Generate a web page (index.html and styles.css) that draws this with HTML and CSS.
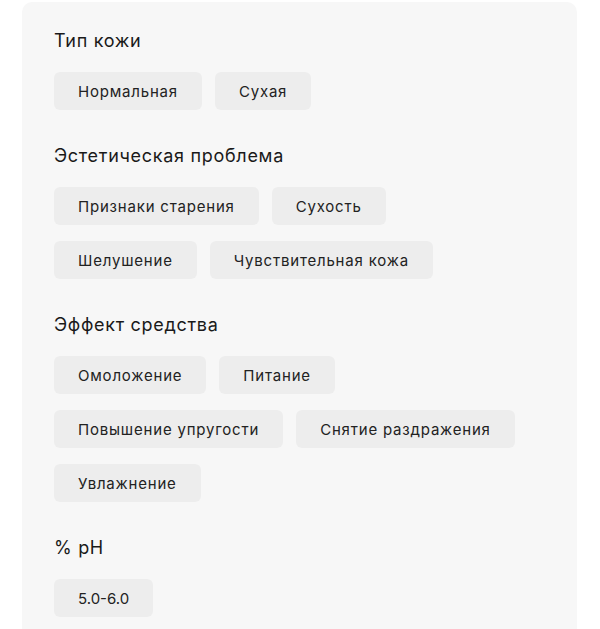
FILE: index.html
```html
<!DOCTYPE html>
<html lang="ru">
<head>
<meta charset="utf-8">
<link rel="stylesheet" href="styles.css">
</head>
<body>
<div class="card">
  <section class="group">
    <h3 class="title">Тип кожи</h3>
    <div class="chips">
      <span class="chip">Нормальная</span>
      <span class="chip">Сухая</span>
    </div>
  </section>
  <section class="group">
    <h3 class="title">Эстетическая проблема</h3>
    <div class="chips">
      <span class="chip">Признаки старения</span>
      <span class="chip">Сухость</span>
      <span class="chip">Шелушение</span>
      <span class="chip">Чувствительная кожа</span>
    </div>
  </section>
  <section class="group">
    <h3 class="title">Эффект средства</h3>
    <div class="chips">
      <span class="chip">Омоложение</span>
      <span class="chip">Питание</span>
      <span class="chip">Повышение упругости</span>
      <span class="chip">Снятие раздражения</span>
      <span class="chip">Увлажнение</span>
    </div>
  </section>
  <section class="group">
    <h3 class="title">% pH</h3>
    <div class="chips">
      <span class="chip chip-num">5.0-6.0</span>
    </div>
  </section>
</div>
</body>
</html>
```
FILE: styles.css
```css
html, body {
  margin: 0;
  padding: 0;
  background: #ffffff;
}
body {
  font-family: Inter, "Noto Sans", sans-serif;
  color: #1f1f1f;
}
.card {
  margin: 2px 0 0 22px;
  width: 555px;
  box-sizing: border-box;
  padding: 27px 32px 40px;
  background: #f7f7f7;
  border-radius: 10px 10px 0 0;
  display: flex;
  flex-direction: column;
  gap: 34px;
}
.group {
  display: flex;
  flex-direction: column;
  gap: 19px;
}
.title {
  margin: 0;
  font-size: 18px;
  line-height: 24px;
  font-weight: 400;
  letter-spacing: 0.7px;
  color: #1a1a1a;
}
.chips {
  display: flex;
  flex-wrap: wrap;
  gap: 16px 13px;
  max-width: 470px;
}
.chip {
  display: inline-flex;
  align-items: center;
  height: 38px;
  padding: 0 24px;
  background: #ededed;
  border-radius: 6px;
  font-size: 15px;
  letter-spacing: 0.8px;
  color: #222222;
}
.chip-num {
  letter-spacing: 0;
}
```
